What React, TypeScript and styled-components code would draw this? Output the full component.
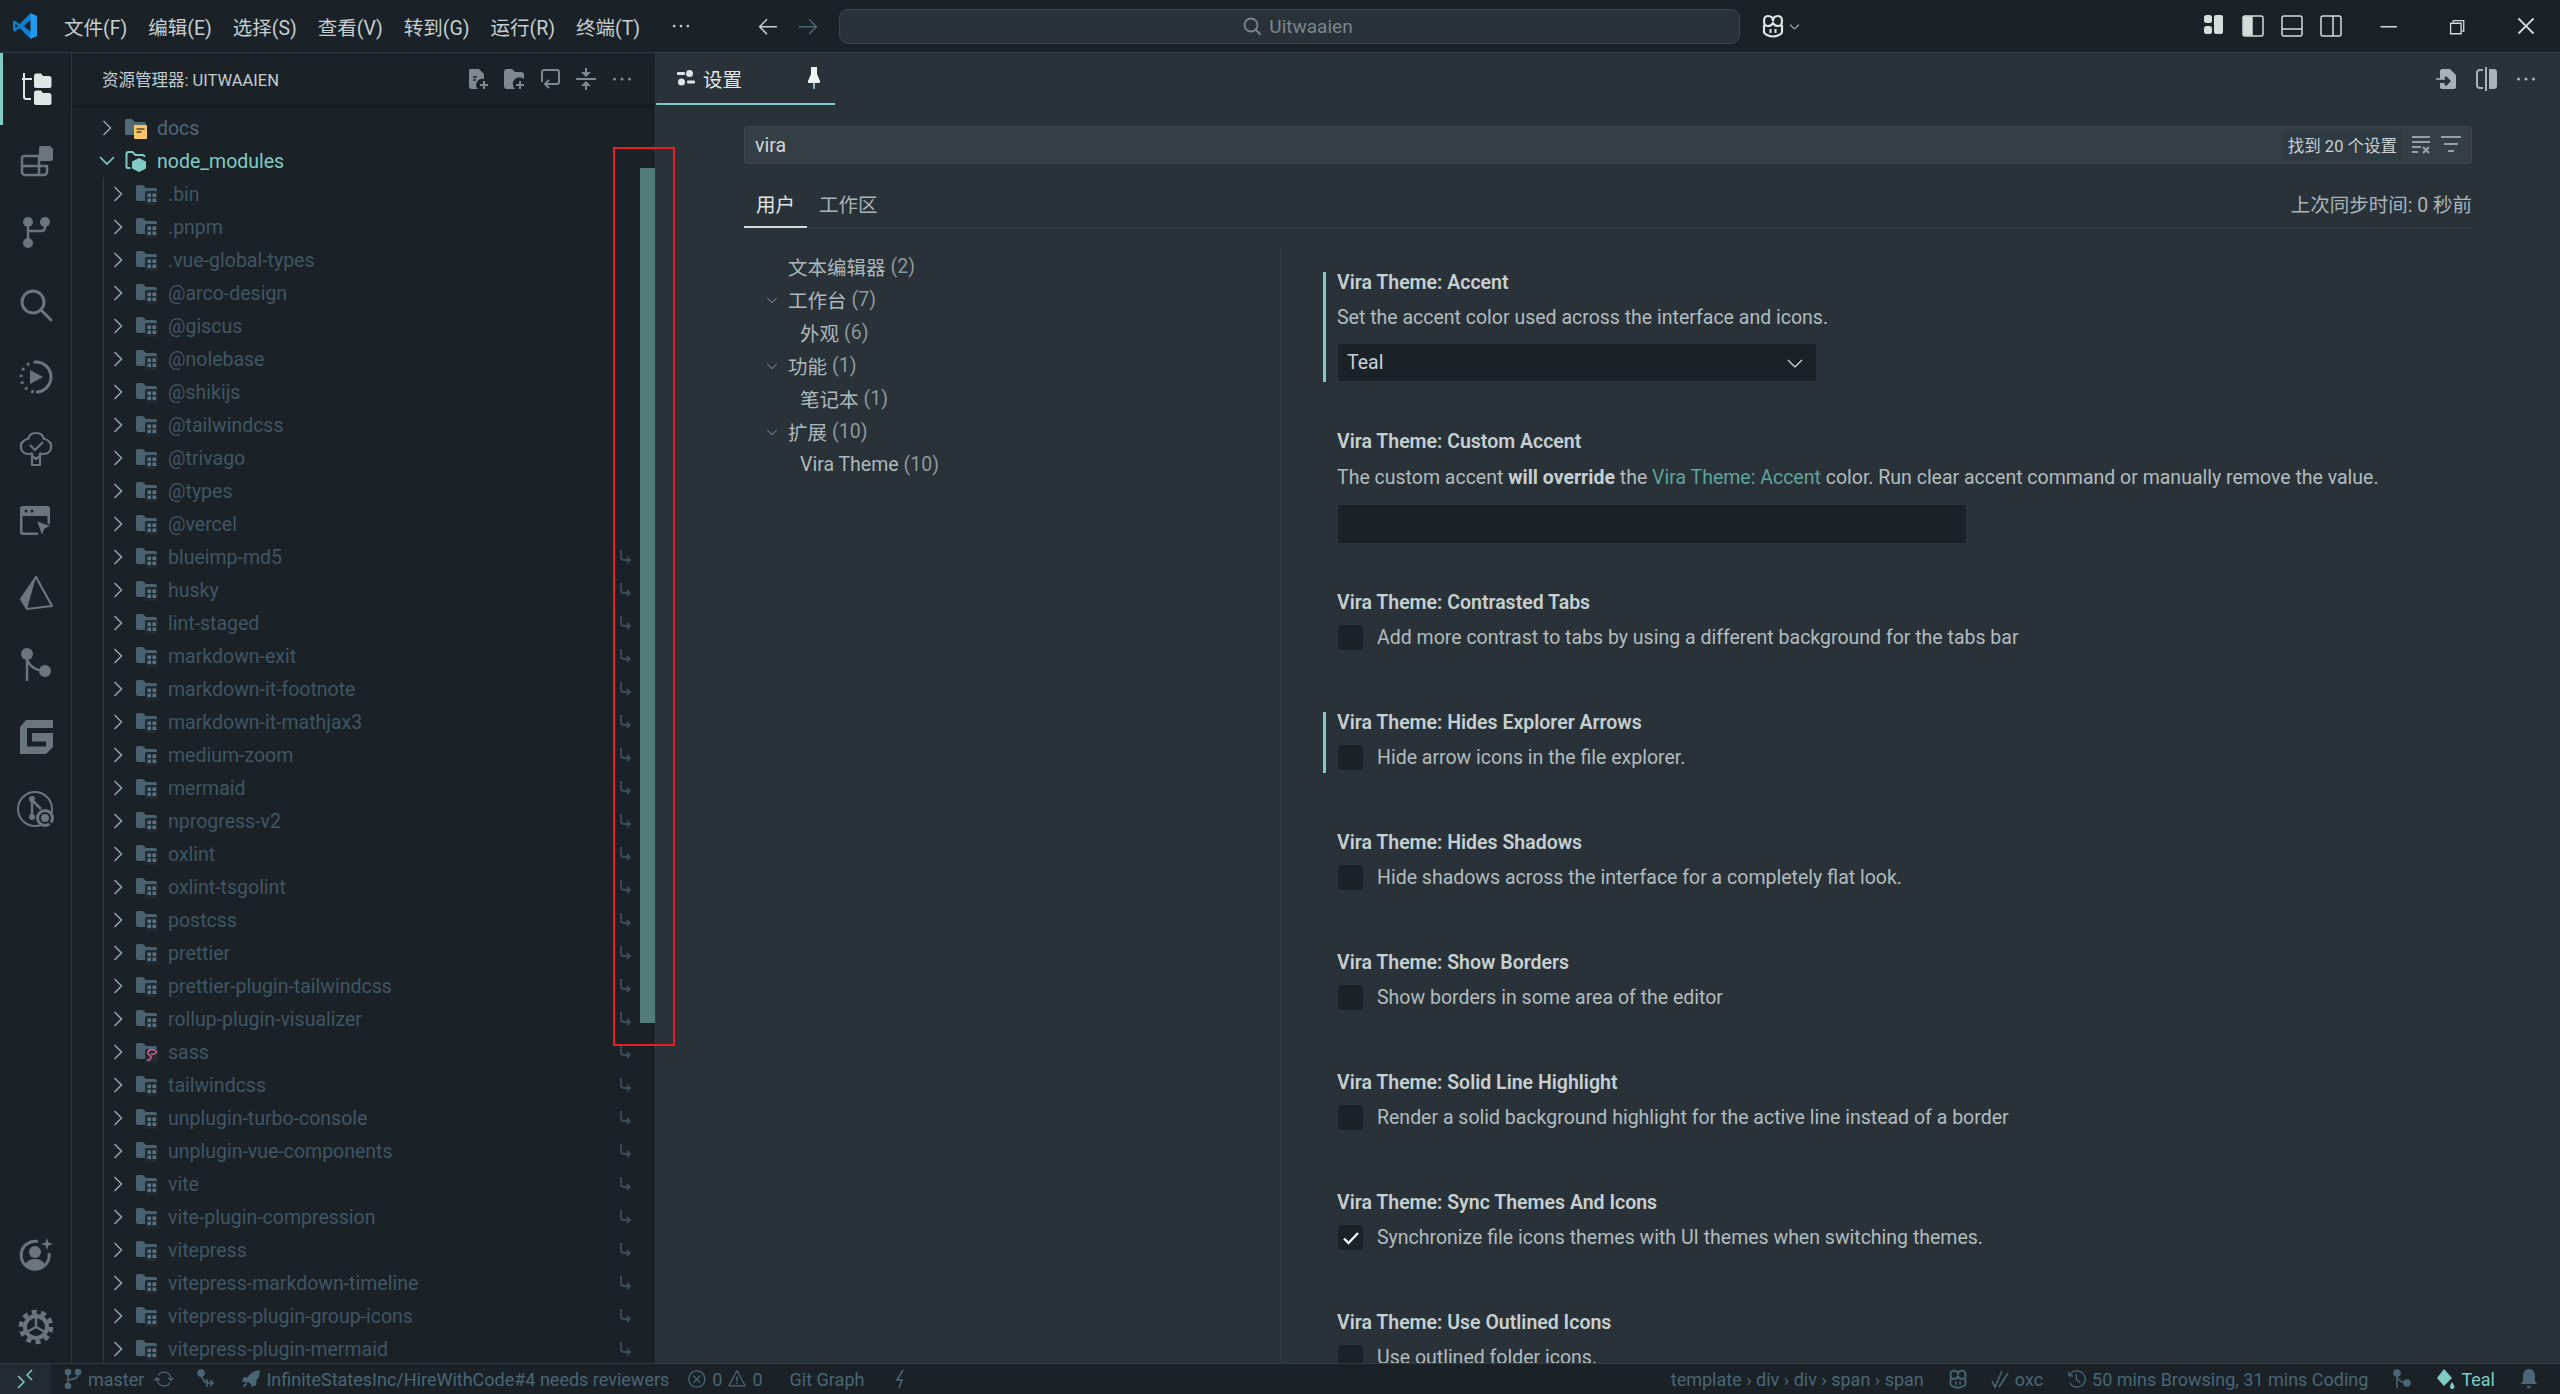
/**
 * VS Code settings window, Vira Teal theme
 */

import React from 'react';
import styled, { createGlobalStyle } from 'styled-components';
import {
    VscArrowLeft,
    VscArrowRight,
    VscChevronDown,
    VscChromeClose,
    VscChromeMinimize,
    VscChromeRestore,
    VscEllipsis,
    VscError,
    VscHistory,
    VscSync,
    VscWarning,
} from 'react-icons/vsc';

const BG_DARK = '#1a2228';
const BG_EDITOR = '#283238';
const BORDER = '#303c44';
const ACCENT = '#80cbc4';
const ICON = '#6b767c';
const TEXT = '#bcc6c8';
const FONT = 'Roboto, "Noto Sans CJK SC", sans-serif';

const GlobalStyle = createGlobalStyle`
    html, body {
        margin: 0;
        padding: 0;
        background: ${BG_DARK};
        font-family: ${FONT};
        font-size: 19.5px;
    }
    * { box-sizing: border-box; }
`;

const Shell = styled.div`
    display: flex;
    flex-direction: column;
    height: 100vh;
    overflow: hidden;
    color: ${TEXT};
`;

/* ---------- title bar ---------- */

const TitleBar = styled.div`
    display: grid;
    grid-template-columns: 740px 99px 901px 1fr;
    align-items: center;
    height: 53px;
    flex-shrink: 0;
    background: ${BG_DARK};
    border-bottom: 1px solid ${BORDER};
`;

const MenuArea = styled.div`
    display: flex;
    align-items: center;
`;

const LogoBox = styled.div`
    display: flex;
    justify-content: center;
    width: 53.5px;
    padding-right: 3px;
`;

const MenuItem = styled.div`
    padding: 0 10.5px;
    color: #c6cfd1;
    white-space: nowrap;
`;

const MoreMenu = styled.div`
    display: flex;
    margin-left: 19px;
    color: #c6cfd1;
    font-size: 22px;
`;

const NavArea = styled.div`
    display: flex;
    align-items: center;
    gap: 16px;
    padding-left: 16px;
`;

const NavArrow = styled.span<{ $dim?: boolean }>`
    display: flex;
    font-size: 24px;
    color: ${p => (p.$dim ? '#4d6572' : '#c9d2d4')};
`;

const CommandCenter = styled.div`
    display: flex;
    align-items: center;
    justify-content: center;
    gap: 7px;
    height: 35px;
    padding-left: 16px;
    background: ${BG_EDITOR};
    border: 1px solid #3b464d;
    border-radius: 9px;
    color: #7b878b;
    font-size: 19px;
`;

const TitleRight = styled.div`
    display: flex;
    align-items: center;
    height: 100%;
`;

const CopilotBox = styled.div`
    display: flex;
    align-items: center;
    gap: 2px;
    margin-left: 21px;
    color: #d9e0e0;
`;

const LayoutGroup = styled.div`
    display: flex;
    margin-left: auto;
    margin-right: 3px;
`;

const LayoutButton = styled.div`
    display: flex;
    justify-content: center;
    width: 39px;
`;

const WindowButton = styled.div`
    display: flex;
    align-items: center;
    justify-content: center;
    width: 69px;
    font-size: 24px;
    color: #d4dbdc;
`;

/* ---------- main ---------- */

const Main = styled.div`
    position: relative;
    display: flex;
    flex: 1;
    min-height: 0;
`;

const ActivityBar = styled.div`
    display: flex;
    flex-direction: column;
    width: 72px;
    flex-shrink: 0;
    background: ${BG_DARK};
    border-right: 1px solid ${BORDER};
`;

const ActivityItem = styled.div<{ $active?: boolean }>`
    display: flex;
    align-items: center;
    justify-content: center;
    height: 72px;
    flex-shrink: 0;
    border-left: 3px solid ${p => (p.$active ? ACCENT : 'transparent')};
    padding-right: 3px;
`;

const ActivitySpacer = styled.div`
    flex: 1;
`;

const SideBar = styled.div`
    position: relative;
    display: flex;
    flex-direction: column;
    width: 584px;
    flex-shrink: 0;
    background: ${BG_DARK};
    border-right: 1px solid ${BORDER};
`;

const SideHeader = styled.div`
    display: flex;
    align-items: center;
    height: 52px;
    padding-left: 30px;
    flex-shrink: 0;
    box-shadow: 0 2px 4px rgba(0, 0, 0, 0.25);
    z-index: 1;
`;

const SideTitle = styled.div`
    font-size: 16.5px;
    color: #c3cccf;
    white-space: nowrap;
`;

const SideActions = styled.div`
    display: flex;
    margin-left: auto;
    margin-right: 15px;
    width: 180px;
`;

const SideAction = styled.div`
    display: flex;
    align-items: center;
    justify-content: center;
    width: 36px;
    color: #7d898e;
    font-size: 24px;
`;

const TreeViewport = styled.div`
    flex: 1;
    min-height: 0;
    overflow: hidden;
`;

const TreeInner = styled.div`
    margin-top: -27px;
`;

const TreeRow = styled.div<{ $child?: boolean }>`
    display: flex;
    align-items: center;
    height: 33px;
    padding-left: ${p => (p.$child ? '6px' : '27px')};
    padding-right: 20px;
`;

const ChevronBox = styled.span`
    display: flex;
    justify-content: center;
    width: 16px;
`;

const FolderBox = styled.span`
    display: flex;
    margin-left: 10px;
    margin-right: 10px;
`;

const FileName = styled.span<{ $tone?: 'open' | 'docs' }>`
    padding-top: 1px;
    color: ${p => (p.$tone === 'open' ? ACCENT : p.$tone === 'docs' ? '#4f6878' : '#405663')};
    white-space: nowrap;
`;

const LinkMark = styled.span`
    display: flex;
    margin-left: auto;
    margin-right: 4px;
`;

const ChildList = styled.div`
    margin-left: 31px;
    border-left: 1px solid #2f3d45;
`;

const ScrollThumb = styled.div`
    position: absolute;
    top: 115px;
    right: 0;
    width: 15px;
    height: 855px;
    background: #527b79;
`;

const RedFrame = styled.div`
    position: absolute;
    top: 94px;
    left: 613px;
    width: 62px;
    height: 899px;
    border: 2px solid #ed1c24;
    z-index: 5;
    pointer-events: none;
`;

/* ---------- editor ---------- */

const Editor = styled.div`
    display: flex;
    flex-direction: column;
    flex: 1;
    min-width: 0;
    background: ${BG_EDITOR};
`;

const TabBar = styled.div`
    display: flex;
    align-items: stretch;
    height: 52px;
    flex-shrink: 0;
`;

const Tab = styled.div`
    display: flex;
    align-items: center;
    width: 179px;
    padding-left: 21px;
    border-bottom: 2px solid ${ACCENT};
`;

const TabLabel = styled.span`
    margin-left: 8px;
    color: #e2e8e8;
`;

const TabPin = styled.span`
    display: flex;
    margin-left: 64px;
`;

const TabActions = styled.div`
    display: flex;
    align-items: center;
    margin-left: auto;
    margin-right: 14px;
`;

const TabAction = styled.div`
    display: flex;
    justify-content: center;
    width: 39.5px;
    color: #a8b2b6;
    font-size: 24px;
`;

const SettingsPage = styled.div`
    display: flex;
    flex-direction: column;
    flex: 1;
    min-height: 0;
    padding: 21px 88px 0;
    overflow: hidden;
`;

const SearchBox = styled.div`
    display: flex;
    align-items: center;
    height: 38px;
    flex-shrink: 0;
    padding: 0 5px 0 10px;
    background: #333e45;
    border: 1px solid #3b474e;
    border-radius: 3px;
`;

const SearchValue = styled.span`
    padding-top: 1px;
    color: #d0d8d9;
`;

const CountBadge = styled.span`
    display: flex;
    align-items: center;
    height: 30px;
    margin-left: auto;
    margin-right: 4px;
    padding: 0 5px;
    background: #2e3b43;
    border-radius: 3px;
    color: #c8d1d3;
    font-size: 16.5px;
    white-space: nowrap;
`;

const SearchAction = styled.span`
    display: flex;
    justify-content: center;
    width: 30px;
`;

const ScopeTabs = styled.div`
    display: flex;
    align-items: center;
    height: 64px;
    flex-shrink: 0;
    border-bottom: 1px solid ${BORDER};
`;

const ScopeTab = styled.div<{ $active?: boolean }>`
    display: flex;
    align-items: center;
    height: 100%;
    padding: 16px 12px 0;
    margin-bottom: -1px;
    color: ${p => (p.$active ? '#e0e6e6' : '#a9b4b7')};
    border-bottom: 2px solid ${p => (p.$active ? '#d5dcdc' : 'transparent')};
`;

const SyncNote = styled.div`
    margin-left: auto;
    padding-top: 16px;
    color: #aab5b8;
`;

const SettingsBody = styled.div`
    display: flex;
    flex: 1;
    min-height: 0;
    padding-top: 22px;
`;

const Toc = styled.div`
    width: 536px;
    flex-shrink: 0;
`;

const TocRow = styled.div<{ $nested?: boolean }>`
    display: flex;
    align-items: center;
    height: 33px;
    padding-left: ${p => (p.$nested ? '32px' : '20px')};
    color: #aeb9bc;
`;

const TocChevron = styled.span`
    display: flex;
    justify-content: center;
    width: 16px;
    margin-right: 8px;
    font-size: 22px;
    color: #7a878c;
`;

const TocCount = styled.span`
    margin-left: 5px;
    color: #8d999d;
`;

const Content = styled.div`
    flex: 1;
    min-width: 0;
    padding-top: 22px;
    border-left: 1px solid ${BORDER};
`;

const SettingItem = styled.div<{ $modified?: boolean; $gapAfter: number }>`
    margin-left: 42px;
    margin-bottom: ${p => p.$gapAfter}px;
    padding-left: 11px;
    padding-bottom: 1px;
    border-left: 3px solid ${p => (p.$modified ? ACCENT : 'transparent')};
`;

const SettingTitle = styled.div`
    height: 22px;
    line-height: 22px;
    font-weight: 600;
    color: #c6d0d2;
`;

const SettingDesc = styled.div`
    margin-top: 12px;
    height: 22px;
    line-height: 24px;
    color: #b1bcbf;
    white-space: nowrap;
    strong { font-weight: 700; color: #c6d0d2; }
`;

const MarkdownDesc = styled(SettingDesc)`
    margin-top: 13px;
`;

const DescLink = styled.span`
    color: #5fa49c;
`;

const SelectBox = styled.div`
    display: flex;
    align-items: center;
    justify-content: space-between;
    width: 478px;
    height: 37px;
    margin: 16px 0 0 1px;
    padding: 0 9px;
    background: ${BG_DARK};
    border-radius: 3px;
    color: #c9d2d3;
`;

const SelectArrow = styled.span`
    display: flex;
    font-size: 24px;
    color: #c9d2d3;
`;

const TextInput = styled.div`
    width: 628px;
    height: 38px;
    margin: 17px 0 0 1px;
    background: ${BG_DARK};
    border-radius: 3px;
`;

const CheckRow = styled.div`
    display: flex;
    align-items: center;
    gap: 14px;
    height: 25px;
    margin: 11px 0 2px 1px;
    color: #b1bcbf;
    white-space: nowrap;
`;

const CheckBox = styled.span`
    display: flex;
    align-items: center;
    justify-content: center;
    width: 25px;
    height: 25px;
    flex-shrink: 0;
    background: ${BG_DARK};
    border-radius: 4px;
`;

/* ---------- status bar ---------- */

const StatusBar = styled.div`
    display: flex;
    align-items: center;
    height: 31px;
    flex-shrink: 0;
    background: ${BG_DARK};
    border-top: 1px solid ${BORDER};
    color: #4b6675;
    font-size: 18px;
    white-space: nowrap;
`;

const RemoteButton = styled.div`
    display: flex;
    align-items: center;
    justify-content: center;
    width: 51px;
    height: 100%;
    background: #222c32;
`;

const StatusItem = styled.div<{ $gap?: number; $accent?: boolean }>`
    display: flex;
    align-items: center;
    gap: 5px;
    margin-left: ${p => p.$gap ?? 0}px;
    color: ${p => (p.$accent ? ACCENT : 'inherit')};
`;

const StatusRight = styled.div`
    display: flex;
    align-items: center;
    margin-left: auto;
    margin-right: 21px;
`;

/* ---------- drawn icons ---------- */

const VscodeLogo = () => (
    <svg width="26" height="26" viewBox="0 0 100 100">
        <path d="M71 99 29 58 12 71 4 67V33l8-4 17 13L71 1l25 11v76z" fill="#0f7fd0" />
        <path d="M71 99V1l25 11v76z" fill="#1f9cf0" />
        <path d="M71 28 45 50l26 22z" fill={BG_DARK} />
        <path d="M13 40v20l10-10z" fill={BG_DARK} />
    </svg>
);

const Copilot = ({ size = 24, color = '#dfe5e5' }: { size?: number; color?: string }) => (
    <svg width={size} height={size} viewBox="0 0 24 24" fill="none" stroke={color} strokeWidth="2.200">
        <path d="M12 9c-1 2-3 3-5 3-3 0-4-2-4-5s1-5 4-5 5 2 5 5c0-3 2-5 5-5s4 2 4 5-1 5-4 5c-2 0-4-1-5-3z" />
        <path d="M3 11v7c0 2 5 4.500 9 4.500s9-2.500 9-4.500v-7" />
        <path d="M9.500 15v4M14.500 15v4" strokeWidth="2" />
    </svg>
);

const TreeChevron = ({ open }: { open?: boolean }) =>
    open ? (
        <svg width="16" height="10" viewBox="0 0 16 10" fill="none" stroke={ACCENT} strokeWidth="1.600">
            <path d="M1 1l7 7 7-7" />
        </svg>
    ) : (
        <svg width="10" height="16" viewBox="0 0 10 16" fill="none" stroke="#8ea0a6" strokeWidth="1.600">
            <path d="M1.500 1l7 7-7 7" />
        </svg>
    );

const IconCommandSearch = () => (
    <svg width="20" height="20" viewBox="0 0 20 20" fill="none" stroke="#7b878b" strokeWidth="1.800">
        <circle cx="9" cy="9" r="6.500" />
        <path d="M13.500 13.500l5 5" />
    </svg>
);

const IconFiles = () => (
    <svg width="36" height="36" viewBox="0 0 36 36" fill="#dfe6e6">
        <path d="M6 2v24c0 1.500 1 2 2.500 2H13M4 8h10" fill="none" stroke="#dfe6e6" strokeWidth="2" />
        <path d="M16 5c0-1.500 1-2.500 2-2.500h5l2 2.500h6c1.500 0 2.500 1 2.500 2.500V15c0 1.500-1 2-2.500 2H18c-1.500 0-2-1-2-2z" />
        <path d="M16 22c0-1.500 1-2.500 2-2.500h5l2 2.500h6c1.500 0 2.500 1 2.500 2.500V32c0 1.500-1 2-2.500 2H18c-1.500 0-2-1-2-2z" />
    </svg>
);

const IconExtensions = () => (
    <svg width="36" height="36" viewBox="0 0 36 36" fill="none" stroke={ICON} strokeWidth="2.500">
        <path d="M6 13h15v19H7c-1 0-3-1-3-3V15c0-1 1-2 2-2zM4 23h25v6c0 1-1 3-3 3h-5" />
        <path d="M21 5c0-1 1-2 2-2h9l3 3v10c0 1-1 2-2 2H23c-1 0-2-1-2-2z" fill={ICON} stroke="none" />
    </svg>
);

const IconSourceControl = () => (
    <svg width="36" height="36" viewBox="0 0 36 36" fill={ICON}>
        <circle cx="10" cy="7" r="5" />
        <circle cx="27" cy="7" r="5" />
        <circle cx="10" cy="28" r="5" />
        <path d="M10 8v20M27 8v4c0 3-2 4-4 4H10" fill="none" stroke={ICON} strokeWidth="2.500" />
    </svg>
);

const IconSearch = () => (
    <svg width="36" height="36" viewBox="0 0 36 36" fill="none" stroke={ICON} strokeWidth="3">
        <circle cx="15" cy="15" r="11" />
        <path d="M23 23l10 10" strokeLinecap="round" />
    </svg>
);

const IconDebug = () => (
    <svg width="36" height="36" viewBox="0 0 36 36" fill="none" stroke={ICON} strokeWidth="3">
        <path d="M18 3a15 15 0 0 1 0 30" />
        <path d="M18 3a15 15 0 0 0 0 30" strokeDasharray="2.500 4.500" />
        <path d="M12 11l13 7-13 7z" fill={ICON} stroke="none" />
    </svg>
);

const IconTreeCheck = () => (
    <svg width="36" height="38" viewBox="0 0 36 38" fill="none" stroke={ICON} strokeWidth="2.200" strokeLinejoin="round">
        <path d="M18 3c4 0 7 2 7.500 5.500C29 9.500 34 12 33 18c-.5 4-4 6-7 6l-4-.5V35h-8V23.500L10 24c-3 0-6.500-2-7-6-1-6 4-8.500 7.500-9.500C11 5 14 3 18 3z" />
        <path d="M12 15l5 5 8-8" />
        <path d="M14 26l4 3 4-3" />
    </svg>
);

const IconRemoteWindow = () => (
    <svg width="36" height="36" viewBox="0 0 36 36">
        <path d="M5 3h24c2 0 3 1 3 3v17H20v9H5c-2 0-3-1-3-3V6c0-2 1-3 3-3z" fill={ICON} />
        <rect x="4.500" y="13" width="25" height="16.500" rx="1" fill={BG_DARK} />
        <circle cx="8" cy="8" r="1.500" fill={BG_DARK} />
        <circle cx="14" cy="8" r="1.500" fill={BG_DARK} />
        <path d="M18 17l16 6-7 3-3 8z" fill={ICON} stroke={BG_DARK} strokeWidth="1.500" />
    </svg>
);

const IconPrism = () => (
    <svg width="36" height="36" viewBox="0 0 36 36">
        <path d="M18 2L3 24l6 10 25-3z" fill="none" stroke={ICON} strokeWidth="2.200" strokeLinejoin="round" />
        <path d="M18 2L3 24l6 10z" fill={ICON} />
    </svg>
);

const IconGitLens = () => (
    <svg width="36" height="36" viewBox="0 0 36 36" fill={ICON}>
        <circle cx="9" cy="7" r="6" />
        <circle cx="27" cy="24" r="6" />
        <path d="M9 8v26M9 13c4 8 10 11 18 11" fill="none" stroke={ICON} strokeWidth="2.500" />
    </svg>
);

const IconGitee = () => (
    <svg width="36" height="36" viewBox="0 0 36 36">
        <path d="M8 1h27v34H2V8z" fill={ICON} />
        <path d="M28 35l7-7v8h-7z" fill={BG_DARK} />
        <path d="M36 11.500H11.500V25H28" fill="none" stroke={BG_DARK} strokeWidth="5" />
    </svg>
);

const IconGraphSearch = () => (
    <svg width="38" height="38" viewBox="0 0 38 38" fill="none" stroke={ICON} strokeWidth="2">
        <circle cx="18" cy="19" r="17" />
        <circle cx="15" cy="9" r="3" fill={ICON} stroke="none" />
        <circle cx="15" cy="27" r="3" fill={ICON} stroke="none" />
        <path d="M15 9v18M15 10l9 9" strokeWidth="2.500" />
        <circle cx="28" cy="28" r="9" fill={ICON} stroke="none" />
        <circle cx="28" cy="28" r="5" stroke={BG_DARK} />
        <path d="M31 31l4 4" stroke={BG_DARK} />
    </svg>
);

const IconAccount = () => (
    <svg width="36" height="36" viewBox="0 0 36 36">
        <path d="M20 4.500A14 14 0 1 0 31 16" fill="none" stroke={ICON} strokeWidth="3" />
        <circle cx="17" cy="15" r="6" fill={ICON} />
        <path d="M7 28c2-5 6-6 10-6s8 1 10 6c-3 3-7 5-10 5s-7-2-10-5z" fill={ICON} />
        <path d="M29 1l1.500 4.500L35 7l-4.500 1.500L29 13l-1.500-4.500L23 7l4.500-1.500z" fill={ICON} />
    </svg>
);

const IconGear = () => (
    <svg width="36" height="36" viewBox="0 0 36 36" fill="none" stroke={ICON}>
        <circle cx="18" cy="18" r="11" strokeWidth="4" />
        <circle cx="18" cy="18" r="15" strokeWidth="4.500" strokeDasharray="5 4.420" />
        <path d="M18 18V8M18 18l-9 5M18 18l9 5" strokeWidth="2.500" />
    </svg>
);

const IconSettingsTab = () => (
    <svg width="18" height="18" viewBox="0 0 18 18" fill="#dfe5e5">
        <circle cx="12.500" cy="4.500" r="3.500" />
        <rect x="0" y="3" width="8" height="3" rx="1" />
        <circle cx="4.500" cy="13" r="3.500" />
        <rect x="10" y="11.500" width="8" height="3" rx="1" />
    </svg>
);

const IconPin = () => (
    <svg width="16" height="24" viewBox="0 0 16 24" fill="#f2f5f5">
        <path d="M5 1h6v7l3 7c.3 1 0 2-1 2H3c-1 0-1.300-1-1-2l3-7z" />
        <rect x="7.200" y="16" width="1.600" height="7" fill="#b8d4e0" />
    </svg>
);

const IconNewFile = () => (
    <svg width="24" height="24" viewBox="0 0 24 24">
        <path d="M4 2h9l5 5v5a6 6 0 0 0-6 10H6c-2 0-3-1-3-3V4c0-1 0-2 1-2z" fill="#7d898e" />
        <path d="M7 10h4M7 13h3" stroke={BG_DARK} strokeWidth="1.500" />
        <path d="M18 14v8M14 18h8" stroke="#7d898e" strokeWidth="2" />
    </svg>
);

const IconNewFolder = () => (
    <svg width="24" height="24" viewBox="0 0 24 24">
        <path d="M2 5c0-2 1-3 3-3h5l3 3h6c2 0 3 1 3 3v4a6 6 0 0 0-9 10H5c-2 0-3-1-3-3z" fill="#7d898e" />
        <path d="M18 14v8M14 18h8" stroke="#7d898e" strokeWidth="2" />
    </svg>
);

const IconRefreshBack = () => (
    <svg width="24" height="24" viewBox="0 0 24 24" fill="none" stroke="#7d898e" strokeWidth="2">
        <path d="M4 15V5c0-1 1-2 2-2h13c1 0 2 1 2 2v10c0 1-1 2-2 2H7" />
        <path d="M11 13l-4 4 4 4" />
    </svg>
);

const IconCollapse = () => (
    <svg width="24" height="24" viewBox="0 0 24 24" fill="#7d898e">
        <rect x="2" y="11" width="20" height="2" />
        <rect x="11" y="1" width="2" height="6" />
        <path d="M7 5h10l-5 5z" />
        <rect x="11" y="17" width="2" height="6" />
        <path d="M7 19h10l-5-5z" />
    </svg>
);

const IconGoToFile = () => (
    <svg width="24" height="24" viewBox="0 0 24 24">
        <path d="M7 2h8l6 6v12c0 1-1 2-2 2H7c-1 0-2-1-2-2v-4h5l-1 1 2 2 5-5-5-5-2 2 1 1H5V4c0-1 1-2 2-2z" fill="#a8b2b6" />
        <path d="M1 12h9" stroke="#a8b2b6" strokeWidth="1.500" />
    </svg>
);

const IconSplit = () => (
    <svg width="24" height="24" viewBox="0 0 24 24">
        <path d="M8 3H5C3 3 2 4 2 6v12c0 2 1 3 3 3h3" fill="none" stroke="#a8b2b6" strokeWidth="2" />
        <path d="M14 2h5c2 0 3 1 3 3v14c0 2-1 3-3 3h-5z" fill="#a8b2b6" />
        <path d="M11 0v24" stroke="#a8b2b6" strokeWidth="2" />
    </svg>
);

const IconClearFilter = () => (
    <svg width="20" height="20" viewBox="0 0 20 20" stroke="#96a1a5" strokeWidth="2" fill="none">
        <path d="M1 2h18M1 7h18M1 12h9M1 17h6" />
        <path d="M12 12l6 6M18 12l-6 6" strokeWidth="2.200" />
    </svg>
);

const IconListFilter = () => (
    <svg width="22" height="20" viewBox="0 0 22 20" stroke="#96a1a5" strokeWidth="2" fill="none">
        <path d="M1 2h20M4 9h14M8 16h6" />
    </svg>
);

const LayoutIcon = ({ kind }: { kind: 'custom' | 'left' | 'bottom' | 'right' }) => {
    const c = '#d5dcdc';
    if (kind === 'custom') {
        return (
            <svg width="20" height="20" viewBox="0 0 20 20" fill={c}>
                <rect x="0" y="0" width="8" height="8" rx="2.500" />
                <rect x="0" y="11" width="8" height="8" rx="2.500" />
                <rect x="10" y="0" width="9" height="19" rx="2" />
            </svg>
        );
    }
    return (
        <svg width="22" height="22" viewBox="0 0 22 22" fill="none" stroke={c} strokeWidth="1.500">
            <rect x="1" y="1" width="20" height="20" rx="2" />
            {kind === 'left' && <path d="M2 2h8v18H2z" fill={c} />}
            {kind === 'bottom' && <path d="M1 14h20" />}
            {kind === 'right' && <path d="M13 1v20" />}
        </svg>
    );
};

const FolderIcon = ({ variant = 'dep' }: { variant?: 'dep' | 'docs' | 'node' | 'sass' | 'dist' }) => {
    if (variant === 'node') {
        return (
            <svg width="22" height="22" viewBox="0 0 22 22">
                <path d="M1.500 17V4c0-1 1-2 2-2h4l3 3h7c1 0 2 1 2 2" fill="none" stroke={ACCENT} strokeWidth="2" />
                <path d="M1.500 17c0 .5.5 1 1 1h3" fill="none" stroke={ACCENT} strokeWidth="2" />
                <path d="M14 8l7 3.500v7L14 22l-7-3.500v-7z" fill={ACCENT} />
            </svg>
        );
    }
    const body = variant === 'docs' ? '#526a78' : variant === 'dist' ? '#6b5a4a' : '#4a6270';
    return (
        <svg width="22" height="22" viewBox="0 0 22 22">
            <path d="M0 4c0-1.500 1-2 2-2h5l3 3h9c1.500 0 2 1 2 2v2H11v9H2c-1 0-2-.5-2-2z" fill={body} />
            {variant === 'docs' && (
                <>
                    <rect x="9" y="8" width="13" height="14" rx="1" fill="#f6c667" />
                    <path d="M11.500 12h8M11.500 15h5" stroke="#5a4a2a" strokeWidth="1.500" />
                </>
            )}
            {variant === 'dep' && (
                <>
                    <rect x="9" y="8" width="13" height="14" rx="2" fill="#212b31" />
                    <rect x="11.500" y="10.500" width="3.500" height="3.500" fill="#5a7483" />
                    <rect x="16.500" y="10.500" width="3.500" height="3.500" fill="#5a7483" />
                    <rect x="11.500" y="15.500" width="3.500" height="3.500" fill="#5a7483" />
                    <rect x="16.500" y="15.500" width="3.500" height="3.500" fill="#5a7483" />
                </>
            )}
            {variant === 'sass' && (
                <>
                    <rect x="9" y="8" width="13" height="14" rx="2" fill="#212b31" />
                    <path d="M11 19c2 1 4-1 4-3s-4-2-3-5 6-3 8-1-3 4-5 3" fill="none" stroke="#c66394" strokeWidth="1.600" />
                </>
            )}
        </svg>
    );
};

const LinkIcon = () => (
    <svg width="12" height="16" viewBox="0 0 12 16" fill="none" stroke="#3b4d58" strokeWidth="1.800">
        <path d="M2 1v7c0 2 1 3 3 3h6M8 8l3 3-3 3" />
    </svg>
);

const CheckIcon = () => (
    <svg width="20" height="20" viewBox="0 0 20 20" fill="none" stroke="#f0f4f4" strokeWidth="2.400">
        <path d="M3 10.500l4.500 4.500L17 5" />
    </svg>
);

const StatusIcon = ({ children, w = 20 }: { children: React.ReactNode; w?: number }) => (
    <svg width={w} height="20" viewBox={`0 0 ${w} 20`} fill="none" stroke="#4b6675" strokeWidth="1.600">
        {children}
    </svg>
);

/* ---------- data ---------- */

const MENUS = ['文件(F)', '编辑(E)', '选择(S)', '查看(V)', '转到(G)', '运行(R)', '终端(T)'];

const TOP_ACTIVITIES = [
    <IconFiles />,
    <IconExtensions />,
    <IconSourceControl />,
    <IconSearch />,
    <IconDebug />,
    <IconTreeCheck />,
    <IconRemoteWindow />,
    <IconPrism />,
    <IconGitLens />,
    <IconGitee />,
    <IconGraphSearch />,
];

const PLAIN_DEPS = [
    '.bin', '.pnpm', '.vue-global-types', '@arco-design', '@giscus', '@nolebase', '@shikijs',
    '@tailwindcss', '@trivago', '@types', '@vercel',
];

const LINKED_DEPS = [
    'blueimp-md5', 'husky', 'lint-staged', 'markdown-exit', 'markdown-it-footnote', 'markdown-it-mathjax3',
    'medium-zoom', 'mermaid', 'nprogress-v2', 'oxlint', 'oxlint-tsgolint', 'postcss', 'prettier',
    'prettier-plugin-tailwindcss', 'rollup-plugin-visualizer', 'sass', 'tailwindcss', 'unplugin-turbo-console',
    'unplugin-vue-components', 'vite', 'vite-plugin-compression', 'vitepress', 'vitepress-markdown-timeline',
    'vitepress-plugin-group-icons', 'vitepress-plugin-mermaid',
];

const TOC = [
    { label: '文本编辑器', count: 2 },
    { label: '工作台', count: 7, open: true },
    { label: '外观', count: 6, nested: true },
    { label: '功能', count: 1, open: true },
    { label: '笔记本', count: 1, nested: true },
    { label: '扩展', count: 10, open: true },
    { label: 'Vira Theme', count: 10, nested: true },
];

const CHECK_SETTINGS = [
    { title: 'Contrasted Tabs', desc: 'Add more contrast to tabs by using a different background for the tabs bar' },
    { title: 'Hides Explorer Arrows', desc: 'Hide arrow icons in the file explorer.', modified: true },
    { title: 'Hides Shadows', desc: 'Hide shadows across the interface for a completely flat look.' },
    { title: 'Show Borders', desc: 'Show borders in some area of the editor' },
    { title: 'Solid Line Highlight', desc: 'Render a solid background highlight for the active line instead of a border' },
    { title: 'Sync Themes And Icons', desc: 'Synchronize file icons themes with UI themes when switching themes.', checked: true },
    { title: 'Use Outlined Icons', desc: 'Use outlined folder icons.' },
];

const DepRow = ({ name, linked }: { name: string; linked?: boolean }) => (
    <TreeRow $child>
        <ChevronBox><TreeChevron /></ChevronBox>
        <FolderBox><FolderIcon variant={name === 'sass' ? 'sass' : 'dep'} /></FolderBox>
        <FileName>{name}</FileName>
        {linked && <LinkMark><LinkIcon /></LinkMark>}
    </TreeRow>
);

export default function App() {
    return (
        <Shell>
            <GlobalStyle />
            <TitleBar>
                <MenuArea>
                    <LogoBox><VscodeLogo /></LogoBox>
                    {MENUS.map(m => <MenuItem key={m}>{m}</MenuItem>)}
                    <MoreMenu><VscEllipsis /></MoreMenu>
                </MenuArea>
                <NavArea>
                    <NavArrow><VscArrowLeft /></NavArrow>
                    <NavArrow $dim><VscArrowRight /></NavArrow>
                </NavArea>
                <CommandCenter>
                    <IconCommandSearch />
                    Uitwaaien
                </CommandCenter>
                <TitleRight>
                    <CopilotBox>
                        <Copilot />
                        <VscChevronDown size={15} />
                    </CopilotBox>
                    <LayoutGroup>
                        <LayoutButton><LayoutIcon kind="custom" /></LayoutButton>
                        <LayoutButton><LayoutIcon kind="left" /></LayoutButton>
                        <LayoutButton><LayoutIcon kind="bottom" /></LayoutButton>
                        <LayoutButton><LayoutIcon kind="right" /></LayoutButton>
                    </LayoutGroup>
                    <WindowButton><VscChromeMinimize /></WindowButton>
                    <WindowButton><VscChromeRestore size={21} /></WindowButton>
                    <WindowButton><VscChromeClose /></WindowButton>
                </TitleRight>
            </TitleBar>

            <Main>
                <ActivityBar>
                    {TOP_ACTIVITIES.map((icon, i) => (
                        <ActivityItem key={i} $active={i === 0}>{icon}</ActivityItem>
                    ))}
                    <ActivitySpacer />
                    <ActivityItem><IconAccount /></ActivityItem>
                    <ActivityItem><IconGear /></ActivityItem>
                </ActivityBar>

                <SideBar>
                    <SideHeader>
                        <SideTitle>资源管理器: UITWAAIEN</SideTitle>
                        <SideActions>
                            <SideAction><IconNewFile /></SideAction>
                            <SideAction><IconNewFolder /></SideAction>
                            <SideAction><IconRefreshBack /></SideAction>
                            <SideAction><IconCollapse /></SideAction>
                            <SideAction><VscEllipsis /></SideAction>
                        </SideActions>
                    </SideHeader>
                    <TreeViewport>
                        <TreeInner>
                            <TreeRow>
                                <ChevronBox />
                                <FolderBox><FolderIcon variant="dist" /></FolderBox>
                            </TreeRow>
                            <TreeRow>
                                <ChevronBox><TreeChevron /></ChevronBox>
                                <FolderBox><FolderIcon variant="docs" /></FolderBox>
                                <FileName $tone="docs">docs</FileName>
                            </TreeRow>
                            <TreeRow>
                                <ChevronBox><TreeChevron open /></ChevronBox>
                                <FolderBox><FolderIcon variant="node" /></FolderBox>
                                <FileName $tone="open">node_modules</FileName>
                            </TreeRow>
                            <ChildList>
                                {PLAIN_DEPS.map(d => <DepRow key={d} name={d} />)}
                                {LINKED_DEPS.map(d => <DepRow key={d} name={d} linked />)}
                            </ChildList>
                        </TreeInner>
                    </TreeViewport>
                    <ScrollThumb />
                </SideBar>

                <Editor>
                    <TabBar>
                        <Tab>
                            <IconSettingsTab />
                            <TabLabel>设置</TabLabel>
                            <TabPin><IconPin /></TabPin>
                        </Tab>
                        <TabActions>
                            <TabAction><IconGoToFile /></TabAction>
                            <TabAction><IconSplit /></TabAction>
                            <TabAction><VscEllipsis /></TabAction>
                        </TabActions>
                    </TabBar>
                    <SettingsPage>
                        <SearchBox>
                            <SearchValue>vira</SearchValue>
                            <CountBadge>找到 20 个设置</CountBadge>
                            <SearchAction><IconClearFilter /></SearchAction>
                            <SearchAction><IconListFilter /></SearchAction>
                        </SearchBox>
                        <ScopeTabs>
                            <ScopeTab $active>用户</ScopeTab>
                            <ScopeTab>工作区</ScopeTab>
                            <SyncNote>上次同步时间: 0 秒前</SyncNote>
                        </ScopeTabs>
                        <SettingsBody>
                            <Toc>
                                {TOC.map(t => (
                                    <TocRow key={t.label} $nested={t.nested}>
                                        <TocChevron>{t.open && <VscChevronDown />}</TocChevron>
                                        {t.label}
                                        <TocCount>({t.count})</TocCount>
                                    </TocRow>
                                ))}
                            </Toc>
                            <Content>
                                <SettingItem $modified $gapAfter={49}>
                                    <SettingTitle>Vira Theme: Accent</SettingTitle>
                                    <SettingDesc>Set the accent color used across the interface and icons.</SettingDesc>
                                    <SelectBox>
                                        Teal
                                        <SelectArrow><VscChevronDown /></SelectArrow>
                                    </SelectBox>
                                </SettingItem>
                                <SettingItem $gapAfter={48}>
                                    <SettingTitle>Vira Theme: Custom Accent</SettingTitle>
                                    <MarkdownDesc>
                                        The custom accent <strong>will override</strong> the{' '}
                                        <DescLink>Vira Theme: Accent</DescLink> color. Run clear accent command or manually remove the value.
                                    </MarkdownDesc>
                                    <TextInput />
                                </SettingItem>
                                {CHECK_SETTINGS.map(s => (
                                    <SettingItem key={s.title} $modified={s.modified} $gapAfter={59}>
                                        <SettingTitle>Vira Theme: {s.title}</SettingTitle>
                                        <CheckRow>
                                            <CheckBox>{s.checked && <CheckIcon />}</CheckBox>
                                            {s.desc}
                                        </CheckRow>
                                    </SettingItem>
                                ))}
                            </Content>
                        </SettingsBody>
                    </SettingsPage>
                </Editor>

                <RedFrame />
            </Main>

            <StatusBar>
                <RemoteButton>
                    <svg width="20" height="20" viewBox="0 0 20 20" fill="none" stroke={ACCENT} strokeWidth="1.500">
                        <path d="M2 7l6 6-6 6M16 1l-5 5 5 5" />
                    </svg>
                </RemoteButton>
                <StatusItem $gap={12}>
                    <StatusIcon>
                        <circle cx="5" cy="3" r="2.500" fill="#4b6675" />
                        <circle cx="5" cy="17" r="2.500" fill="#4b6675" />
                        <circle cx="15" cy="3" r="2.500" fill="#4b6675" />
                        <path d="M5 3v14M15 3v3c0 3-3 4-10 5" />
                    </StatusIcon>
                    master
                </StatusItem>
                <StatusItem $gap={10}><VscSync size={20} /></StatusItem>
                <StatusItem $gap={22}>
                    <StatusIcon>
                        <circle cx="5" cy="4" r="3" fill="#4b6675" />
                        <path d="M5 5c1 4 3 8 6 9h6M14 11l3 3-3 3M11 10v8" />
                    </StatusIcon>
                </StatusItem>
                <StatusItem $gap={25}>
                    <StatusIcon>
                        <path d="M7 12c0-5 4-9 11-10 0 7-3 10-8 12zM7 9H3l-1 3 5 1M11 14v3l3-1 1-4M3 18c0-2 1-3 3-3" fill="#4b6675" />
                    </StatusIcon>
                    InfiniteStatesInc/HireWithCode#4 needs reviewers
                </StatusItem>
                <StatusItem $gap={18}>
                    <VscError size={20} /> 0 <VscWarning size={20} /> 0
                </StatusItem>
                <StatusItem $gap={27}>Git Graph</StatusItem>
                <StatusItem $gap={30}>
                    <StatusIcon w={14}>
                        <path d="M9 1L3 11h5l-3 8" />
                    </StatusIcon>
                </StatusItem>
                <StatusRight>
                    <StatusItem>template › div › div › span › span</StatusItem>
                    <StatusItem $gap={24}><Copilot size={20} color="#4b6675" /></StatusItem>
                    <StatusItem $gap={22}>
                        <StatusIcon>
                            <path d="M2 12l3 6L12 2M9 18L18 4" />
                        </StatusIcon>
                        oxc
                    </StatusItem>
                    <StatusItem $gap={24}>
                        <VscHistory size={20} />
                        50 mins Browsing, 31 mins Coding
                    </StatusItem>
                    <StatusItem $gap={24}>
                        <StatusIcon>
                            <circle cx="5" cy="4" r="3" fill="#4b6675" />
                            <circle cx="15" cy="14" r="3" fill="#4b6675" />
                            <path d="M5 5v14M5 8c2 4 5 6 10 6" />
                        </StatusIcon>
                    </StatusItem>
                    <StatusItem $gap={24} $accent>
                        <svg width="20" height="22" viewBox="0 0 20 22" fill={ACCENT}>
                            <path d="M8 1l8 9-8 8-7-8z" />
                            <path d="M16 14c2 3 3 4 2 6s-4 1-4-1 1-3 2-5z" />
                        </svg>
                        Teal
                    </StatusItem>
                    <StatusItem $gap={24}>
                        <svg width="20" height="22" viewBox="0 0 20 22" fill="#4b6675">
                            <path d="M10 1c4 0 6 3 6 7v5l2 3H2l2-3V8c0-4 2-7 6-7z" />
                            <path d="M8 18h4c0 3-4 3-4 0z" />
                        </svg>
                    </StatusItem>
                </StatusRight>
            </StatusBar>
        </Shell>
    );
}
